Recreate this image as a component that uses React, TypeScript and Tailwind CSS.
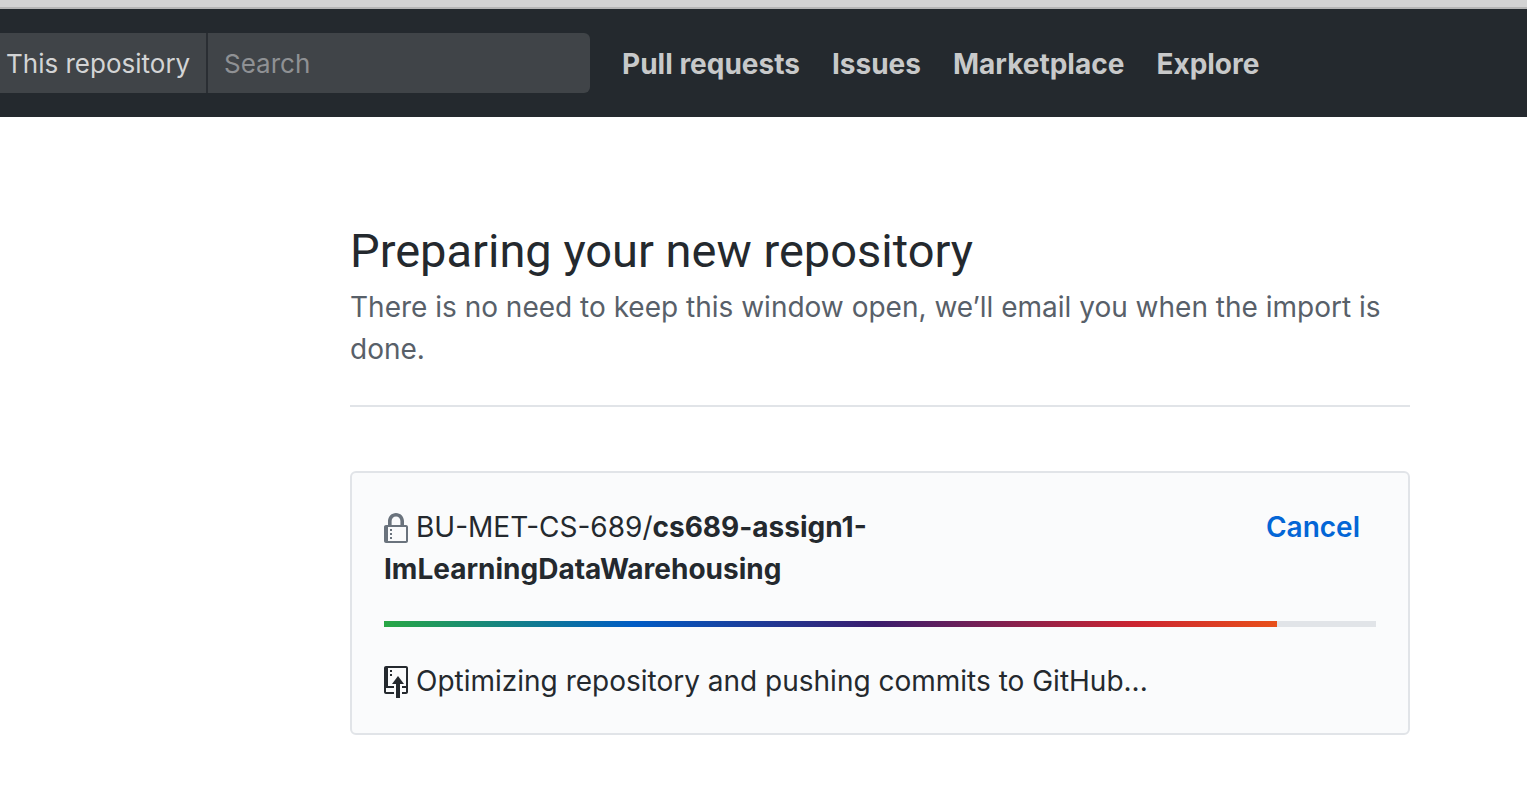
const navItems = ["Pull requests", "Issues", "Marketplace", "Explore"];

function LockIcon() {
  return (
    <svg viewBox="0 0 12 16" className="mr-2 inline-block h-8 w-6 align-middle" fill="#6a737d" aria-hidden="true">
      <path fillRule="evenodd" d="M4 13H3v-1h1v1zm8-6v7c0 .55-.45 1-1 1H1c-.55 0-1-.45-1-1V7c0-.55.45-1 1-1h1V4c0-2.2 1.8-4 4-4s4 1.8 4 4v2h1c.55 0 1 .45 1 1zM3.8 6h4.41V4c0-1.22-.98-2.2-2.2-2.2-1.22 0-2.2.98-2.2 2.2v2H3.8zM11 7H2v7h9V7zM4 8H3v1h1V8zm0 2H3v1h1v-1z" />
    </svg>
  );
}

function RepoPushIcon() {
  return (
    <svg viewBox="0 0 12 16" className="mr-2 inline-block h-8 w-6 align-text-bottom" fill="#24292e" aria-hidden="true">
      <path fillRule="evenodd" d="M4 3H3V2h1v1zM3 5h1V4H3v1zm4 0L4 9h2v7h2V9h2L7 5zm4-5H1C.45 0 0 .45 0 1v12c0 .55.45 1 1 1h4v-1H1v-2h4v-1H2V1h9.02L11 10H9v1h2v2H9v1h2c.55 0 1-.45 1-1V1c0-.55-.45-1-1-1z" />
    </svg>
  );
}

function Header() {
  return (
    <header className="flex items-center gap-8 border-t-2 border-[#b5b5b5] bg-[#24292e] py-6">
      <form className="flex h-15 w-[590px] items-stretch text-[26px] leading-[60px]">
        <label htmlFor="search" className="w-52 shrink-0 border-r-2 border-[#2a2e33] bg-[#404448] pt-px pl-[6px] whitespace-nowrap text-[#d3d4d5]">
          This repository
        </label>
        <input
          id="search"
          type="text"
          placeholder="Search"
          className="min-w-0 flex-1 rounded-r-md bg-[#404448] px-4 pt-[2px] text-white outline-none placeholder:text-[#8f9194]"
        />
      </form>
      <nav className="flex gap-8 pt-[2px] text-[28px] leading-[42px] font-bold whitespace-nowrap text-[#c8c9ca]">
        {navItems.map((item) => (
          <a key={item} href="#">
            {item}
          </a>
        ))}
      </nav>
    </header>
  );
}

export default function App() {
  return (
    <div className="min-h-screen bg-white font-['Inter',sans-serif] text-[#24292e]">
      <div className="h-[7px] bg-[#d3d3d3]" />
      <Header />
      <main className="pt-[99px] pr-[117px] pb-16 pl-[350px] text-[28px] leading-[42px]">
        <div className="border-b-2 border-[#e1e4e8] pb-[35px]">
          <h1 className="font-['Roboto',sans-serif] text-[47px] leading-[70px]">Preparing your new repository</h1>
          <p className="text-[#586069]">
            There is no need to keep this window open, we’ll email you when the import is done.
          </p>
        </div>
        <section className="mt-16 rounded-md border-2 border-[#e1e4e8] bg-[#fafbfc] px-8 pt-[33px] pb-[31px]">
          <div className="flex items-start justify-between">
            <h2 className="w-[560px]">
              <LockIcon />
              BU-MET-CS-689/<strong className="font-bold">cs689-assign1-ImLearningDataWarehousing</strong>
            </h2>
            <button type="button" className="px-4 font-semibold text-[#0366d6]">
              Cancel
            </button>
          </div>
          <div className="mt-[31px] mb-[33px] h-[6px] bg-[#e1e4e8]" role="progressbar" aria-label="Import progress" aria-valuenow={90}>
            <div className="h-full w-9/10 bg-[linear-gradient(to_right,#28a745,#005cc5_28%,#3a1d6e_55%,#cb2431_84%,#e8501a)]" />
          </div>
          <p>
            <RepoPushIcon />
            Optimizing repository and pushing commits to GitHub...
          </p>
        </section>
      </main>
    </div>
  );
}
